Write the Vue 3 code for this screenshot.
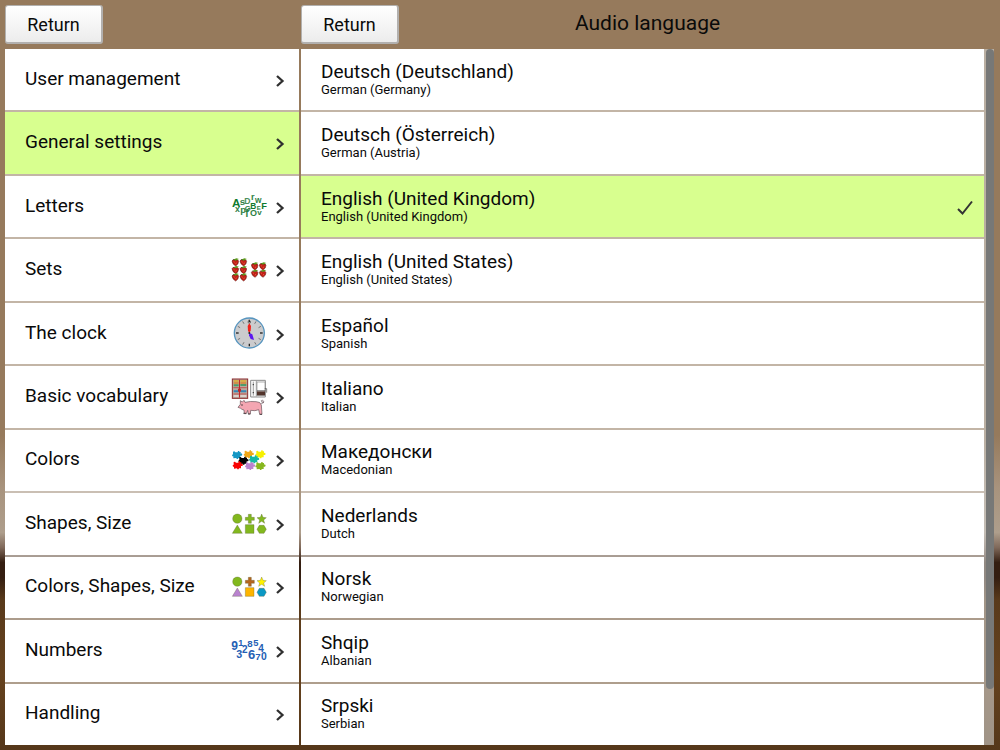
<template>
  <div class="settings">
    <section class="column">
      <header class="column-header">
        <button type="button" class="return-btn">Return</button>
      </header>
      <nav class="rows" aria-label="Settings">
        <button
          v-for="item in menu"
          :key="item.name"
          type="button"
          class="row menu-row"
          :class="{ active: item.name === activeMenu }"
          @click="activeMenu = item.name"
        >
          <span class="menu-label">{{ item.name }}</span>

          <svg v-if="item.icon" class="menu-icon" :viewBox="item.viewBox" aria-hidden="true">
            <g v-if="item.icon === 'glyphs'" class="glyphs">
              <text
                v-for="g in item.glyphs"
                :key="g[0]"
                :x="g[1]"
                :y="g[2]"
                :font-size="g[3]"
                :fill="g[4] || item.color"
              >{{ g[0] }}</text>
            </g>

            <g v-else-if="item.icon === 'sets'">
              <g v-for="(b, i) in berries" :key="i" :transform="`translate(${b[0]} ${b[1]}) scale(1.1 1)`">
                <path d="M-9 -4Q-8 -9 0 -7Q9 -9 9 -3Q9 6 1 11Q-8 6 -9 -4Z" fill="#c32017" stroke="#5c1712" stroke-width="1.5" />
                <path d="M-5 -3L-2 0M3 1L1 5" stroke="#f06a50" stroke-width="2" />
                <path d="M-6 -8L-2 -10L3 -12L10 -10L4 -7L1 -5L-3 -7Z" fill="#5c9a1c" />
                <path d="M-8 -8L-4 -9L-2 -7Z" fill="#243c10" />
              </g>
            </g>

            <g v-else-if="item.icon === 'clock'">
              <circle cx="88" cy="81" r="45" fill="#cbcbcd" stroke="#5795bf" stroke-width="4" />
              <path
                v-for="n in 12"
                :key="n"
                d="M88 41V49"
                :transform="`rotate(${n * 30} 88 81)`"
                :stroke="n % 3 ? '#555' : '#222'"
                :stroke-width="n % 3 ? 2 : 4"
              />
              <circle cx="88" cy="48" r="4" fill="none" stroke="#555" stroke-width="2" />
              <path d="M88 52L93 60L92 74L88 81L84 74L83 60Z" fill="#f0221b" />
              <path d="M88 81L97 85L102 102L92 99L87 88Z" fill="#5d16ef" />
              <circle cx="88" cy="81" r="3" fill="#222" />
            </g>

            <g v-else-if="item.icon === 'vocabulary'">
              <rect x="37" y="31" width="46" height="58" fill="#b9aaa0" stroke="#8a2a2c" stroke-width="3" />
              <path d="M41 37H56M61 37H79" stroke="#e0b02e" stroke-width="5" />
              <path d="M41 43H56M61 43H79" stroke="#d9852f" stroke-width="4" />
              <path d="M41 50H56M61 49H79" stroke="#4e9b6b" stroke-width="6" />
              <path d="M40 57H80M40 76H80" stroke="#c82c2c" stroke-width="2" />
              <path d="M41 68H56M61 68H79" stroke="#3586b5" stroke-width="6" />
              <path d="M41 82H56M61 82H79" stroke="#e6e0da" stroke-width="5" />
              <path d="M58.500 33V87" stroke="#c0262b" stroke-width="3" />
              <path d="M54 60H63V69H54Z" fill="#c0262b" />
              <path d="M92 35H136V85H92Z" fill="#fafafa" stroke="#8b8b8b" stroke-width="3" />
              <path d="M100 39V81M109 37V83" stroke="#777" stroke-width="2" />
              <path d="M98 48H102M98 72H102" stroke="#333" stroke-width="3" />
              <rect x="111" y="40" width="24" height="40" fill="#fff" stroke="#888" stroke-width="2" />
              <rect x="111" y="68" width="24" height="12" fill="#52342b" />
              <path d="M111 66H136M134 60H140V72" fill="none" stroke="#444" stroke-width="2" />
              <path
                d="M54 116L61 107L61 96L67 100L72 95L75 101Q91 97 108 99Q122 99 124 109L126 137H119L116 123Q105 128 92 125L91 136H85L83 125L79 135H73L72 124Q65 123 62 119Z"
                fill="#f4a6b2"
                stroke="#625056"
                stroke-width="2"
              />
              <path d="M123 104Q132 105 131 98Q128 92 124 96Q124 102 132 101" fill="none" stroke="#695158" stroke-width="2" />
              <circle cx="66" cy="109" r="2" fill="#222" />
              <path d="M70 134H78M84 136H91M119 137H126" stroke="#222" stroke-width="2" />
            </g>

            <g v-else-if="item.icon === 'puzzle'">
              <path
                v-for="p in pieces"
                :key="p[2]"
                d="M-11 -10L-7 -11L-4 -8L3 -8L4 -12L8 -12L8 -9L12 -9L12 -4L15 -5L17 -1L15 2L11 2L11 9L5 9L4 12L0 12L-1 9L-10 10L-10 4L-13 4L-14 0L-11 -2Z"
                :transform="`translate(${p[0]} ${p[1]})`"
                :fill="p[2]"
              />
            </g>

            <g v-else stroke="#50562c" stroke-opacity="0.6" stroke-width="1.500">
              <circle cx="52" cy="54" r="14" :fill="item.colors[0]" />
              <path d="M85 41H94V50H103V59H94V68H85V59H76V50H85Z" :fill="item.colors[1]" />
              <path d="M125 40L129 50L139 51L131 58L134 68L125 62L116 68L119 58L111 51L121 50Z" :fill="item.colors[2]" />
              <path d="M52 73L67 98H37Z" :fill="item.colors[3]" />
              <path d="M76 72H102V98H76Z" :fill="item.colors[4]" />
              <path d="M118 74H132L139 86L132 98H118L111 86Z" :fill="item.colors[5]" />
            </g>
          </svg>

          <svg class="chevron" viewBox="0 0 12 14" aria-hidden="true">
            <path d="M3 3L8.500 8L3 13" fill="none" stroke="#303030" stroke-width="2.300" />
          </svg>
        </button>
      </nav>
    </section>

    <section class="column">
      <header class="column-header">
        <button type="button" class="return-btn">Return</button>
        <h1 class="column-title">Audio language</h1>
      </header>
      <div class="scroll-area">
        <div class="rows">
          <button
            v-for="lang in languages"
            :key="lang.name"
            type="button"
            class="row language-row"
            :class="{ active: lang.name === selected }"
            :aria-pressed="lang.name === selected"
            @click="selected = lang.name"
          >
            <span class="language-text">
              <span class="language-name">{{ lang.name }}</span>
              <span class="language-english">{{ lang.english }}</span>
            </span>
            <svg v-if="lang.name === selected" class="check" viewBox="0 0 18 16" aria-hidden="true">
              <path d="M2 10L6.500 14.500L16 2.500" fill="none" stroke="#333" stroke-width="2" />
            </svg>
          </button>
        </div>
        <div class="scrollbar">
          <div class="scroll-thumb"></div>
        </div>
      </div>
    </section>
  </div>
</template>

<script setup>
import { ref } from 'vue';

const activeMenu = ref('General settings');
const selected = ref('English (United Kingdom)');

// glyph, x, baseline, size, optional color
const letters = [
  ['A', 36, 78, 35, '#0f7a2e'],
  ['s', 59, 74, 29],
  ['D', 73, 71, 26, '#4b8f5c'],
  ['r', 93, 59, 27],
  ['w', 105, 66, 25],
  ['F', 124, 84, 28, '#0f7a2e'],
  ['x', 45, 95, 26],
  ['p', 61, 98, 28],
  ['G', 74, 90, 23],
  ['B', 91, 84, 25, '#0f7a2e'],
  ['E', 110, 88, 18],
  ['f', 76, 110, 30],
  ['O', 90, 106, 27],
  ['v', 112, 104, 24]
];

const digits = [
  ['9', 34, 73, 36],
  ['1', 55, 60, 27],
  ['8', 82, 62, 29],
  ['5', 100, 60, 28],
  ['4', 115, 77, 30],
  ['3', 49, 96, 32],
  ['2', 66, 82, 30],
  ['6', 84, 98, 39],
  ['7', 106, 103, 29],
  ['0', 123, 102, 31]
];

const berries = [
  [46, 51], [70, 51],
  [46, 74], [70, 74],
  [46, 96], [70, 96],
  [104, 63], [128, 63],
  [104, 85], [128, 85]
];

const pieces = [
  [50, 60, '#1597c4'],
  [85, 58, '#f0a818'],
  [120, 58, '#f7f000'],
  [69, 77, '#000000'],
  [101, 73, '#16b8a4'],
  [52, 91, '#f80404'],
  [89, 93, '#b983cf'],
  [120, 93, '#87b71e']
];

const green = '#82b81e';

const menu = [
  { name: 'User management' },
  { name: 'General settings' },
  { name: 'Letters', icon: 'glyphs', viewBox: '36 19 108 120', glyphs: letters, color: '#2e8145' },
  { name: 'Sets', icon: 'sets', viewBox: '36 14 108 120' },
  { name: 'The clock', icon: 'clock', viewBox: '36 24 108 120' },
  { name: 'Basic vocabulary', icon: 'vocabulary', viewBox: '36 25 108 120' },
  { name: 'Colors', icon: 'puzzle', viewBox: '36 15 108 120' },
  { name: 'Shapes, Size', icon: 'shapes', viewBox: '36 10 108 120', colors: [green, green, green, green, green, green] },
  { name: 'Colors, Shapes, Size', icon: 'shapes', viewBox: '36 10 108 120', colors: [green, '#b5651d', '#fff200', '#b983cf', '#fdb400', '#0b98c4'] },
  { name: 'Numbers', icon: 'glyphs', viewBox: '36 15 108 120', glyphs: digits, color: '#2560b4' },
  { name: 'Handling' }
];

const languages = [
  { name: 'Deutsch (Deutschland)', english: 'German (Germany)' },
  { name: 'Deutsch (Österreich)', english: 'German (Austria)' },
  { name: 'English (United Kingdom)', english: 'English (United Kingdom)' },
  { name: 'English (United States)', english: 'English (United States)' },
  { name: 'Español', english: 'Spanish' },
  { name: 'Italiano', english: 'Italian' },
  { name: 'Македонски', english: 'Macedonian' },
  { name: 'Nederlands', english: 'Dutch' },
  { name: 'Norsk', english: 'Norwegian' },
  { name: 'Shqip', english: 'Albanian' },
  { name: 'Srpski', english: 'Serbian' }
];
</script>

<style scoped>
.settings {
  box-sizing: border-box;
  display: grid;
  grid-template-columns: minmax(0, 294fr) minmax(0, 693fr);
  gap: 2px;
  min-height: 100vh;
  padding: 0 6px 5px 5px;
  background: linear-gradient(
    #967a5c 0%,
    #967a5c 58%,
    #a8937d 65%,
    #ae9e8c 71%,
    #80695a 73%,
    #341e11 75%,
    #341e11 77%,
    #593a1b 80%,
    #65421e 90%,
    #55371a 100%
  );
  font-family: Roboto, "Liberation Sans", sans-serif;
  color: #0a0a0a;
}

.column {
  display: flex;
  flex-direction: column;
}

.column-header {
  display: grid;
  grid-template-columns: 1fr auto 1fr;
  align-items: center;
  height: 49px;
}

.return-btn {
  justify-self: start;
  width: 98px;
  height: 39px;
  padding: 0;
  border: 2px solid #b2b0ae;
  border-top-width: 1px;
  border-left-width: 1px;
  border-radius: 3px;
  background: linear-gradient(#ffffff, #ececec);
  font-family: inherit;
  font-size: 18px;
  color: #0a0a0a;
  cursor: pointer;
}

.column-title {
  margin: 0;
  padding-bottom: 4px;
  font-size: 21px;
  font-weight: 400;
  line-height: 24px;
}

.scroll-area {
  flex: 1;
  display: flex;
}

.rows {
  flex: 1;
  display: flex;
  flex-direction: column;
  gap: 2px;
  background: rgba(225, 220, 215, 0.6);
}

.row {
  flex: 1;
  display: flex;
  align-items: center;
  min-height: 44px;
  padding: 0 13px 0 20px;
  border: none;
  background: #ffffff;
  font-family: inherit;
  font-size: 19px;
  color: inherit;
  text-align: left;
  cursor: pointer;
}

.row.active {
  background: #d8ff8f;
}

.menu-label {
  flex: 1;
  padding-bottom: 3px;
}

.menu-icon {
  width: 36px;
  height: 40px;
  margin-right: 6px;
  overflow: visible;
}

.glyphs {
  font-family: "Liberation Sans", sans-serif;
  font-weight: 700;
}

.chevron {
  width: 12px;
  height: 14px;
}

.language-row {
  padding: 0 10px 0 20px;
}

.language-text {
  flex: 1;
  display: flex;
  flex-direction: column;
}

.language-name {
  line-height: 20px;
}

.language-english {
  font-size: 13px;
  line-height: 16px;
}

.check {
  width: 18px;
  height: 16px;
}

.scrollbar {
  width: 8px;
  padding-left: 2px;
  background: rgba(210, 210, 208, 0.6);
}

.scroll-thumb {
  height: 92%;
  border-radius: 4px;
  background: #777877;
}
</style>

<style>
body {
  margin: 0;
}
</style>
